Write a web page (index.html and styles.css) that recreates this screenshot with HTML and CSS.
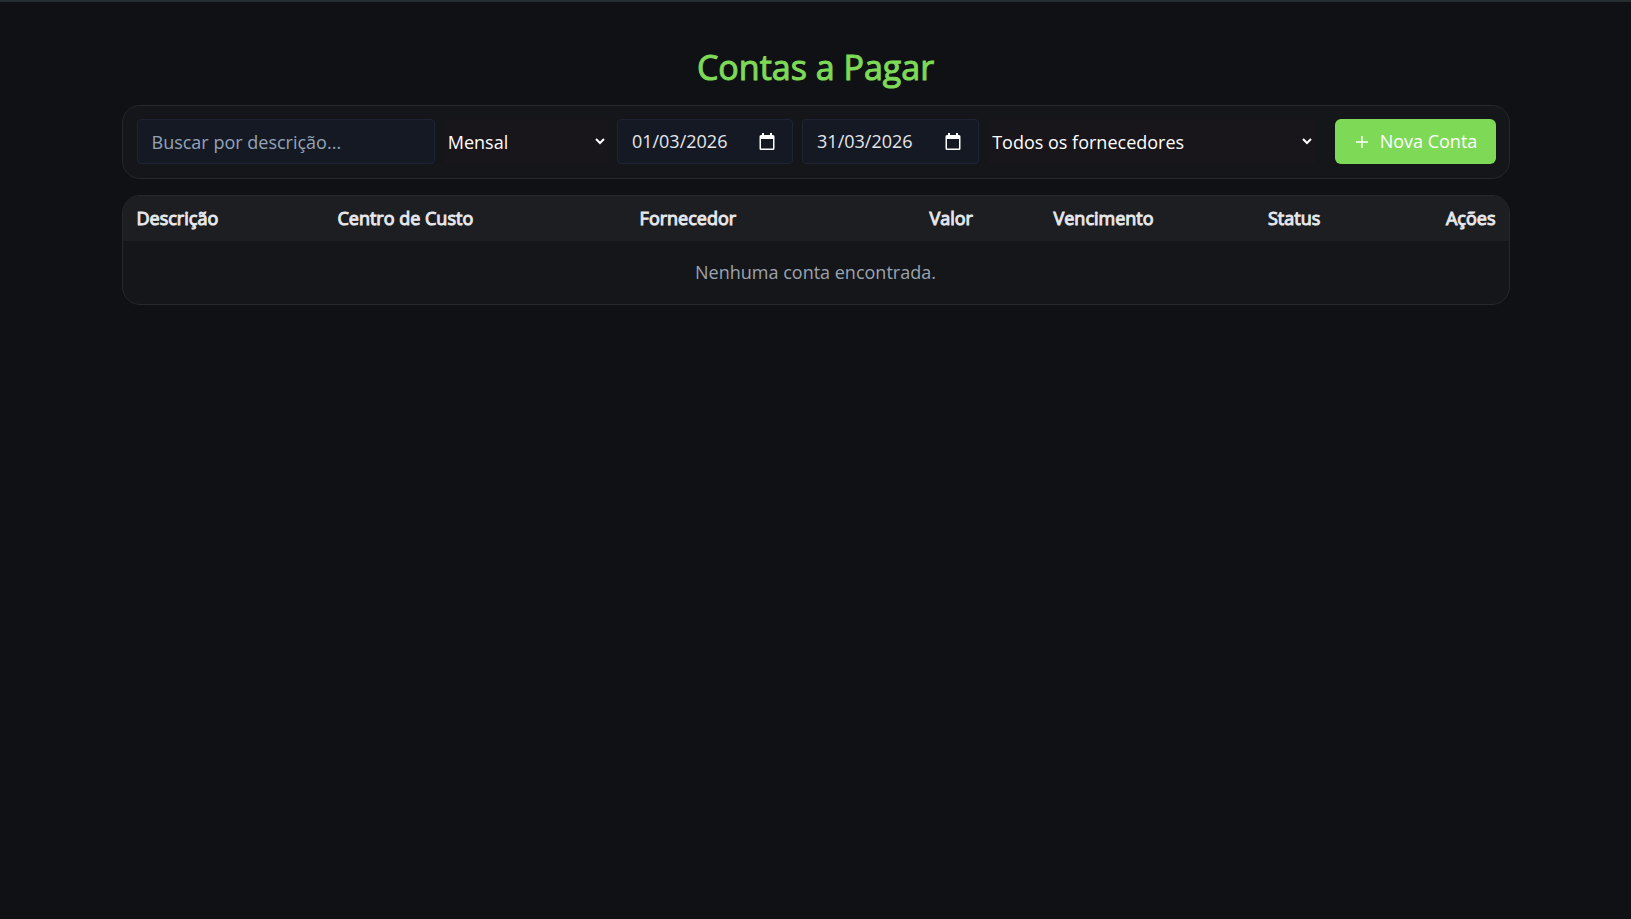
FILE: index.html
```html
<!DOCTYPE html>
<html lang="pt-BR">

<head>
    <meta charset="UTF-8">
    <meta name="viewport" content="width=device-width, initial-scale=1.0">
    <title>Contas a Pagar</title>
    <link rel="stylesheet" href="styles.css">
</head>

<body>
    <main class="container">
        <h1>Contas a Pagar</h1>

        <form class="card toolbar">
            <div class="filters">
                <input type="text" class="field" placeholder="Buscar por descrição..." aria-label="Buscar por descrição">
                <select class="select" aria-label="Período">
                    <option selected>Mensal</option>
                    <option>Semanal</option>
                    <option>Anual</option>
                </select>
                <div class="field date">
                    <input type="text" value="01/03/2026" aria-label="Data inicial">
                    <button type="button" class="calendar" aria-label="Abrir calendário da data inicial">
                        <svg viewBox="0 0 16 17" width="16" height="17">
                            <path d="M3 0h2v2h6V0h2v2h1q1.500 0 1.500 1.500v12q0 1.500-1.500 1.500H2Q.5 17 .5 15.500v-12Q.5 2 2 2h1zM2 6v9.500h12V6z" fill="#fff" fill-rule="evenodd" />
                        </svg>
                    </button>
                </div>
                <div class="field date">
                    <input type="text" value="31/03/2026" aria-label="Data final">
                    <button type="button" class="calendar" aria-label="Abrir calendário da data final">
                        <svg viewBox="0 0 16 17" width="16" height="17">
                            <path d="M3 0h2v2h6V0h2v2h1q1.500 0 1.500 1.500v12q0 1.500-1.500 1.500H2Q.5 17 .5 15.500v-12Q.5 2 2 2h1zM2 6v9.500h12V6z" fill="#fff" fill-rule="evenodd" />
                        </svg>
                    </button>
                </div>
                <select class="select" aria-label="Fornecedor">
                    <option selected>Todos os fornecedores</option>
                </select>
            </div>
            <button type="button" class="btn">
                <svg viewBox="0 0 12 12" width="12" height="12">
                    <path d="M6 0v12M0 6h12" stroke="currentColor" stroke-width="1.400" />
                </svg>
                Nova Conta
            </button>
        </form>

        <div class="card">
            <table>
                <colgroup>
                    <col class="col-desc">
                    <col class="col-centro">
                    <col class="col-forn">
                    <col class="col-valor">
                    <col class="col-venc">
                    <col class="col-status">
                    <col>
                </colgroup>
                <thead>
                    <tr>
                        <th>Descrição</th>
                        <th>Centro de Custo</th>
                        <th>Fornecedor</th>
                        <th class="right">Valor</th>
                        <th class="center">Vencimento</th>
                        <th class="center">Status</th>
                        <th class="right">Ações</th>
                    </tr>
                </thead>
                <tbody>
                    <tr>
                        <td colspan="7" class="empty">Nenhuma conta encontrada.</td>
                    </tr>
                </tbody>
            </table>
        </div>
    </main>
</body>

</html>
```
FILE: styles.css
```css
* {
    box-sizing: border-box;
}

body {
    margin: 0;
    min-height: 100vh;
    background-color: #101115;
    border-top: 2px solid #252f31;
    color: #e5e7eb;
    color-scheme: dark;
    font-family: "Open Sans", "Noto Sans", sans-serif;
    font-size: 18px;
    line-height: 27px;
}

input,
select,
button {
    font: inherit;
}

.container {
    max-width: 1388px;
    margin: 0 auto;
    padding-top: 41px;
}

h1 {
    margin: 0 0 13px;
    color: #7ed957;
    font-size: 34px;
    font-weight: 400;
    line-height: 49px;
    text-align: center;
    -webkit-text-stroke: 1px #7ed957;
}

.card {
    overflow: hidden;
    background-color: #141619;
    border: 1px solid #26282c;
    border-radius: 18px;
}

.toolbar {
    display: flex;
    gap: 20px;
    margin-bottom: 16px;
    padding: 13px 13px 14px 14px;
}

.filters {
    display: grid;
    flex: 1;
    grid-template-columns: 298fr 164fr 176fr 177fr 326fr;
    gap: 9px;
}

.field {
    width: 100%;
    height: 45px;
    padding: 0 14px;
    background-color: #141923;
    border: 1px solid #1d2433;
    border-radius: 4px;
    color: #e5e7eb;
}

.field::placeholder {
    color: #94a3b8;
    opacity: 1;
}

.date {
    display: flex;
    align-items: center;
    justify-content: space-between;
    padding: 0 17px 0 14px;
}

.date input {
    min-width: 0;
    width: 110px;
    padding: 0;
    background: none;
    border: none;
    color: #e5e7eb;
}

.calendar {
    display: flex;
    padding: 0;
    background: none;
    border: none;
    cursor: pointer;
}

.select {
    width: 100%;
    height: 45px;
    padding: 0;
    background-color: #18161a;
    border: none;
    color: #fff;
}

.btn {
    display: flex;
    align-items: center;
    justify-content: center;
    gap: 12px;
    width: 161px;
    height: 45px;
    padding: 0 0 0 3px;
    background-color: #7ed957;
    border: none;
    border-radius: 6px;
    color: #fff;
    cursor: pointer;
}

/* Table */
table {
    width: 100%;
    table-layout: fixed;
    border-collapse: collapse;
}

.col-desc {
    width: 14.5%;
}

.col-centro {
    width: 21.8%;
}

.col-forn {
    width: 15%;
}

.col-valor {
    width: 11%;
}

.col-venc {
    width: 16.9%;
}

.col-status {
    width: 10.6%;
}

th {
    padding: 9px 13px 9px 14px;
    background-color: #1d1e22;
    font-weight: 400;
    text-align: left;
    -webkit-text-stroke: 1px #e5e7eb;
}

.right {
    text-align: right;
}

.center {
    text-align: center;
}

.empty {
    padding: 18px;
    color: #9ca3af;
    text-align: center;
}
```
